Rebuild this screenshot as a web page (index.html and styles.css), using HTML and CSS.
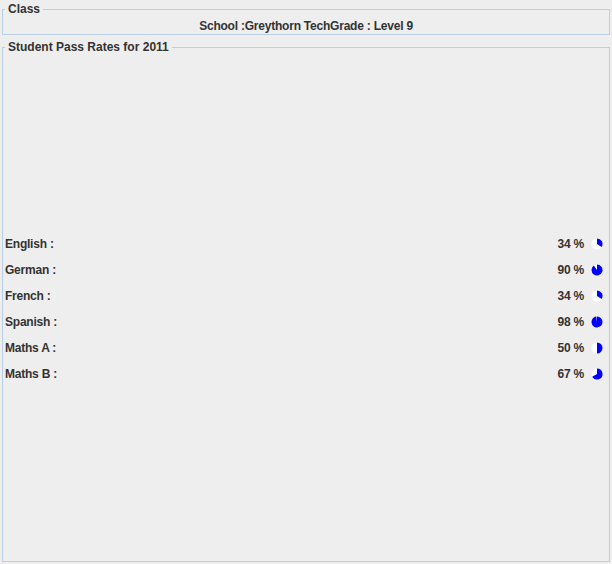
FILE: index.html
```html
<!DOCTYPE html>
<html>
<head>
<meta charset="utf-8">
<link rel="stylesheet" href="styles.css">
</head>
<body>
<fieldset class="box box-class">
  <legend class="box-title">Class</legend>
  <div class="school">School :Greythorn TechGrade : Level 9</div>
</fieldset>
<fieldset class="box box-rates">
  <legend class="box-title">Student Pass Rates for 2011</legend>
  <div class="rows">
    <div class="row">
      <span class="subject">English :</span>
      <span class="pct">34 %</span>
      <svg class="pie" viewBox="0 0 12 12" width="12" height="12"><circle cx="6" cy="6" r="5.5" fill="#fff"/><path d="M6 6 L6 0.5 A5.5 5.5 0 0 1 10.644 8.947 Z" fill="#0000ff"/></svg>
    </div>
    <div class="row">
      <span class="subject">German :</span>
      <span class="pct">90 %</span>
      <svg class="pie" viewBox="0 0 12 12" width="12" height="12"><circle cx="6" cy="6" r="5.5" fill="#fff"/><path d="M6 6 L6 0.5 A5.5 5.5 0 1 1 2.767 1.550 Z" fill="#0000ff"/></svg>
    </div>
    <div class="row">
      <span class="subject">French :</span>
      <span class="pct">34 %</span>
      <svg class="pie" viewBox="0 0 12 12" width="12" height="12"><circle cx="6" cy="6" r="5.5" fill="#fff"/><path d="M6 6 L6 0.5 A5.5 5.5 0 0 1 10.644 8.947 Z" fill="#0000ff"/></svg>
    </div>
    <div class="row">
      <span class="subject">Spanish :</span>
      <span class="pct">98 %</span>
      <svg class="pie" viewBox="0 0 12 12" width="12" height="12"><circle cx="6" cy="6" r="5.5" fill="#fff"/><path d="M6 6 L6 0.5 A5.5 5.5 0 1 1 5.311 0.543 Z" fill="#0000ff"/></svg>
    </div>
    <div class="row">
      <span class="subject">Maths A :</span>
      <span class="pct">50 %</span>
      <svg class="pie" viewBox="0 0 12 12" width="12" height="12"><circle cx="6" cy="6" r="5.5" fill="#fff"/><path d="M6 6 L6 0.5 A5.5 5.5 0 0 1 6 11.5 Z" fill="#0000ff"/></svg>
    </div>
    <div class="row">
      <span class="subject">Maths B :</span>
      <span class="pct">67 %</span>
      <svg class="pie" viewBox="0 0 12 12" width="12" height="12"><circle cx="6" cy="6" r="5.5" fill="#fff"/><path d="M6 6 L6 0.5 A5.5 5.5 0 1 1 1.180 8.650 Z" fill="#0000ff"/></svg>
    </div>
  </div>
</fieldset>
</body>
</html>
```

FILE: styles.css
```css
html, body {
  height: 100%;
}
body {
  margin: 0;
  padding: 2px;
  box-sizing: border-box;
  background: #eeeeee;
  color: #333333;
  font-family: "Liberation Sans", Arial, sans-serif;
  font-size: 12px;
  font-weight: bold;
  line-height: 14px;
  letter-spacing: -0.22px;
  display: flex;
  flex-direction: column;
}
.box {
  margin: 0;
  border: 1px solid #b8cfe5;
  padding: 3px 1px 1px;
  min-width: 0;
}
.box-title {
  padding: 0 3px;
  margin-left: 1px;
  line-height: 14px;
  letter-spacing: 0;
}
.box-class {
  flex: none;
}
.school {
  text-align: center;
}
.box-rates {
  margin-top: 5px;
  flex: 1;
  padding-top: 0;
}
.rows {
  padding-top: 177px;
}
.row {
  display: flex;
  align-items: center;
  height: 26px;
  padding-left: 1px;
  padding-right: 5px;
}
.subject {
  flex: 1;
}
.pct {
  margin-right: 7px;
}
.pie {
  display: block;
}
```
